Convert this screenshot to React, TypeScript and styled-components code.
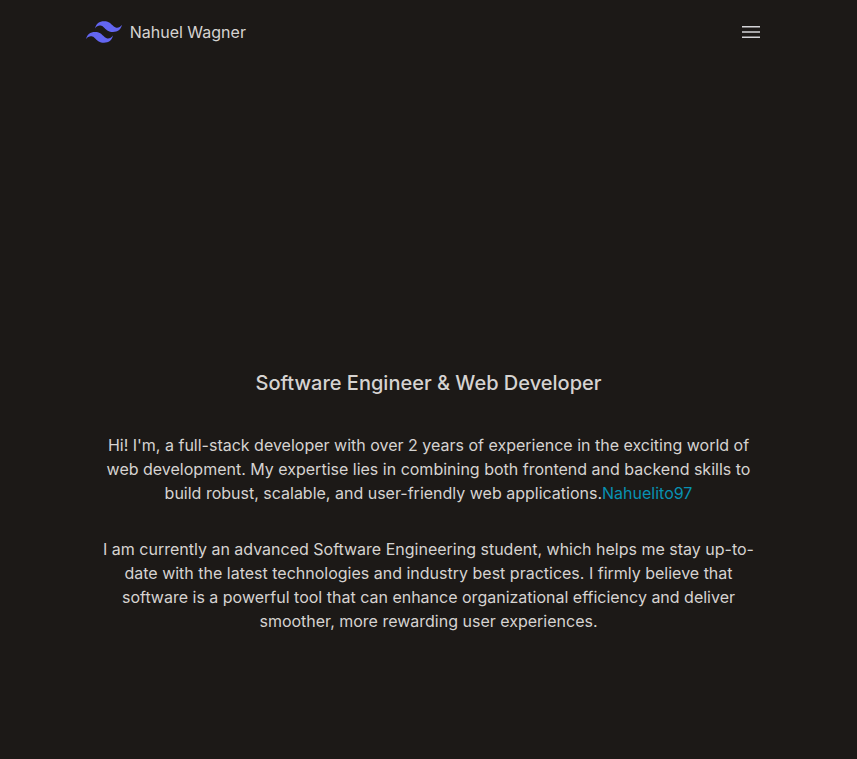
import React from "react";
import styled, { createGlobalStyle } from "styled-components";

const GlobalStyle = createGlobalStyle`
  *, *::before, *::after { box-sizing: border-box; }
  body {
    margin: 0;
    background: #1c1917;
    color: #d6d3d1;
    font-family: Inter, "Liberation Sans", sans-serif;
    font-size: 16px;
    line-height: 24px;
  }
`;

const Header = styled.header`
  display: flex;
  align-items: center;
  justify-content: space-between;
  height: 64px;
  padding: 0 10%;
`;

const Brand = styled.a`
  display: flex;
  align-items: center;
  gap: 8px;
  color: inherit;
  font-weight: 400;
  text-decoration: none;
`;

const BrandMark = styled.svg`
  width: 36px;
  height: 36px;
  fill: #6366f1;
`;

const MenuButton = styled.button`
  display: flex;
  padding: 8px;
  border: 0;
  background: transparent;
  color: #d4d4d8;
  cursor: pointer;
`;

const MenuIcon = styled.svg`
  width: 24px;
  height: 24px;
  fill: none;
  stroke: currentColor;
  stroke-width: 1.5;
`;

const Intro = styled.main`
  display: flex;
  flex-direction: column;
  gap: 32px;
  max-width: 768px;
  margin: 0 auto;
  padding: 301px 56px 128px;
  text-align: center;
`;

const Title = styled.h1`
  margin: 0;
  font-size: 20px;
  line-height: 36px;
  font-weight: 500;
`;

const Paragraph = styled.p`
  width: 100%;
  max-width: 656px;
  margin: 0 auto;
`;

const ProfileLink = styled.a`
  color: #0891b2;
  text-decoration: none;
`;

export default function App() {
  return (
    <>
      <GlobalStyle />
      <Header>
        <Brand href="#">
          <BrandMark viewBox="0 0 24 24" aria-hidden="true">
            <path d="M12.001 4.8c-3.2 0-5.2 1.6-6 4.8 1.2-1.6 2.6-2.2 4.2-1.8.913.228 1.565.89 2.288 1.624C13.666 10.618 15.027 12 18.001 12c3.2 0 5.2-1.6 6-4.8-1.2 1.6-2.6 2.2-4.2 1.8-.913-.228-1.565-.89-2.288-1.624C16.337 6.182 14.976 4.8 12.001 4.8zm-6 7.2c-3.2 0-5.2 1.6-6 4.8 1.2-1.6 2.6-2.2 4.2-1.8.913.228 1.565.89 2.288 1.624 1.177 1.194 2.538 2.576 5.512 2.576 3.2 0 5.2-1.6 6-4.8-1.2 1.6-2.6 2.2-4.2 1.8-.913-.228-1.565-.89-2.288-1.624C10.337 13.382 8.976 12 6.001 12z" />
          </BrandMark>
          Nahuel Wagner
        </Brand>
        <MenuButton type="button" aria-label="Open menu">
          <MenuIcon viewBox="0 0 24 24" aria-hidden="true">
            <path d="M3 6.75h18M3 12h18M3 17.25h18" />
          </MenuIcon>
        </MenuButton>
      </Header>
      <Intro>
        <Title>Software Engineer &amp; Web Developer</Title>
        <Paragraph>
          Hi! I'm, a full-stack developer with over 2 years of experience in the
          exciting world of web development. My expertise lies in combining both
          frontend and backend skills to build robust, scalable, and
          user-friendly web applications.
          <ProfileLink href="#">Nahuelito97</ProfileLink>
        </Paragraph>
        <Paragraph>
          I am currently an advanced Software Engineering student, which helps
          me stay up-to-date with the latest technologies and industry best
          practices. I firmly believe that software is a powerful tool that can
          enhance organizational efficiency and deliver smoother, more rewarding
          user experiences.
        </Paragraph>
      </Intro>
    </>
  );
}
